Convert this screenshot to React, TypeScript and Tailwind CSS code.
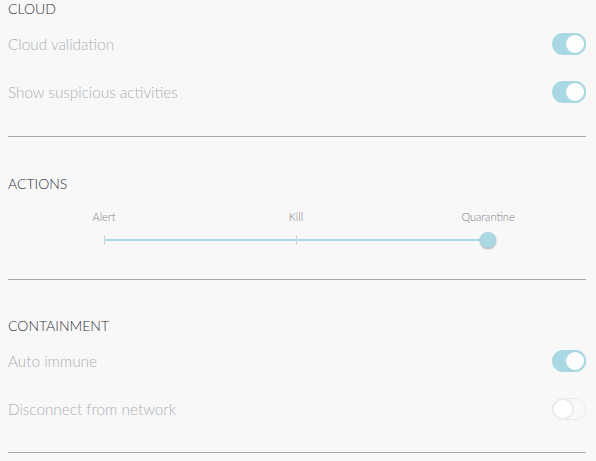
import React from "react";

function Toggle({ on }: { on: boolean }) {
  return (
    <div
      className={
        on
          ? "relative h-[22px] w-[34px] rounded-full bg-[#a9d8e5]"
          : "relative h-[22px] w-[34px] rounded-full border border-[#ececec] bg-[#f8f8f8]"
      }
    >
      <div
        className={
          on
            ? "absolute right-0 top-0 h-[22px] w-[22px] rounded-full border-2 border-[#a9d8e5] bg-white"
            : "absolute -left-px -top-px h-[22px] w-[22px] rounded-full border-2 border-[#ececec] bg-white"
        }
      />
    </div>
  );
}

function Row({ label, on }: { label: string; on: boolean }) {
  return (
    <div className="flex h-12 items-center justify-between">
      <span className="text-[15.3px] font-light text-[#aeb1b6]">{label}</span>
      <Toggle on={on} />
    </div>
  );
}

function Heading({ children }: { children: React.ReactNode }) {
  return (
    <h2 className="h-[18px] text-[14px] font-light leading-[18px] text-[#2f3138]">{children}</h2>
  );
}

function Divider() {
  return <div className="h-px bg-[#a9a9ad]" />;
}

const stops = ["Alert", "Kill", "Quarantine"];

function Slider() {
  return (
    <div className="ml-[96px] w-[384px]">
      <div className="relative h-[14px]">
        {stops.map((s, i) => (
          <span
            key={s}
            className="absolute top-0 -translate-x-1/2 text-[11px] font-light leading-[14px] text-[#7f8086]"
            style={{ left: `${(i / (stops.length - 1)) * 100}%` }}
          >
            {s}
          </span>
        ))}
      </div>
      <div className="relative mt-[11px] h-[10px]">
        <div className="absolute left-0 right-0 top-1/2 h-[2px] -translate-y-1/2 bg-[#a9d8e5]" />
        <div className="absolute left-0 top-0 h-[10px] w-px bg-[#c9d6dc]" />
        <div className="absolute left-1/2 top-0 h-[10px] w-px bg-[#c9d6dc]" />
        <div className="absolute -right-2 top-1/2 h-4 w-4 -translate-y-1/2 rounded-full bg-[#a9d8e5] shadow-[0_1px_2px_rgba(0,0,0,0.35)]" />
      </div>
    </div>
  );
}

export default function App() {
  return (
    <div
      className="h-[461px] w-[596px] overflow-hidden bg-[#f8f8f8] pl-2 pr-[10px]"
      style={{ fontFamily: "Lato, 'Noto Sans', sans-serif" }}
    >
      <section>
        <Heading>CLOUD</Heading>
        <div className="mt-0.5">
          <Row label="Cloud validation" on />
          <Row label="Show suspicious activities" on />
        </div>
      </section>
      <div className="mt-5">
        <Divider />
      </div>

      <section className="mt-[38px]">
        <Heading>ACTIONS</Heading>
        <div className="mt-[17px]">
          <Slider />
        </div>
      </section>
      <div className="mt-[34px]">
        <Divider />
      </div>

      <section className="mt-[37px]">
        <Heading>CONTAINMENT</Heading>
        <div className="mt-0.5">
          <Row label="Auto immune" on />
          <Row label="Disconnect from network" on={false} />
        </div>
      </section>
      <div className="mt-[19px]">
        <Divider />
      </div>
    </div>
  );
}
